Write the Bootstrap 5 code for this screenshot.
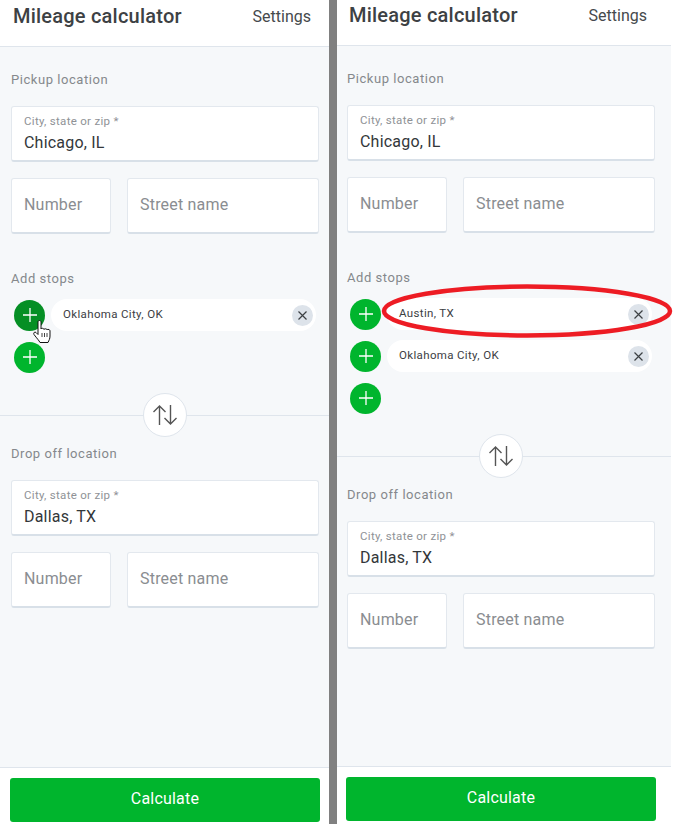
<!DOCTYPE html>
<html><head><meta charset="utf-8"><title>Mileage calculator</title>
<link href="https://cdn.jsdelivr.net/npm/bootstrap@5.3.0/dist/css/bootstrap.min.css" rel="stylesheet">
<style>
html,body{height:824px;overflow:hidden;background:#fff}
body{font-family:Roboto,"Liberation Sans",sans-serif;color:#3c4043}
.shell{height:824px;width:674px;background:#fff}
.pane{background:#f6f8fa;height:825px}
.pane-a{width:329px}
.pane-b{width:334px;margin-top:-1px}
.shell-gap{width:8px;background:#808080;flex:none;height:824px}
.top-bar{height:47px;background:#fff;border-bottom:1px solid #dfe5ec;padding:0 18px 15px 13px;flex:none}
.pane-b .top-bar{padding-left:12px;padding-right:24px}
.app-title{font-size:20px;font-weight:500;color:#3d4144;line-height:1;margin:0;letter-spacing:.22px}
.set-link{font-size:16px;color:#45494c;text-decoration:none;letter-spacing:0;padding-top:2px}
.main-area{padding:0 10px 0 11px;flex:1 1 auto}
.pane-b .main-area{padding:0 16px 0 10px}
.sec-label{font-size:13px;font-weight:400;color:#85888c;line-height:16px;margin:0;letter-spacing:.55px}
.lbl-pick{padding-top:25px;height:59px}
.box{background:#fff;border:1px solid #e3e8ee;border-bottom:2px solid #d8e0e8;border-radius:3px;height:56px;padding:0 12px;display:flex;flex-direction:column;justify-content:center}
.box-lbl{font-size:11.5px;color:#8f9296;line-height:14px;letter-spacing:.3px}
.box-val{font-size:16px;color:#33373a;line-height:22px;margin-top:4px;letter-spacing:.2px}
.box-ph{font-size:16px;color:#8a8d91;line-height:22px;padding-bottom:2px;letter-spacing:.2px}
.addr-row{display:flex;gap:16px;margin-top:16px}
.col-num{width:100px;flex:none}
.col-street{flex:1 1 auto}
.lbl-stops{margin-top:37px;height:28px}
.stop-row{display:flex;align-items:center;gap:6px;margin-left:3px;margin-right:3px;height:32px;margin-bottom:10px}
.round-add{width:31px;height:31px;border-radius:50%;background:#00b52d;border:0;padding:0;flex:none;display:flex;align-items:center;justify-content:center}
.round-add.hover-state{background:#058f24}
.chip{background:#fff;border-radius:16px;height:32px;flex:1 1 auto;display:flex;align-items:center;justify-content:space-between;padding:0 3px 0 12px;font-size:11.5px;color:#3c4043;letter-spacing:.35px}
.chip-x{width:21px;height:21px;border-radius:50%;background:#dde3ea;border:0;padding:0;display:flex;align-items:center;justify-content:center;flex:none}
.swap-line{position:relative;height:1px;background:#dfe5ec;margin:0 -10px 0 -11px}
.pane-b .swap-line{margin:0 -16px 0 -10px}
.swap-btn{position:absolute;left:50%;top:-22px;width:44px;height:44px;margin-left:-22px;border-radius:50%;background:#fff;border:1px solid #dfe5ec;padding:0;display:flex;align-items:center;justify-content:center}
.pane-b .swap-btn{margin-left:-25px}
.stops-box{height:116px}
.pane-b .stops-box{height:158px}
.lbl-drop{padding-top:30px;height:64px}
.foot-bar{height:58px;background:#fff;border-top:1px solid #dfe5ec;padding:10px 9px 0 10px;flex:none}
.pane-b .foot-bar{padding-right:15px;padding-left:9px}
.go-btn{display:block;width:100%;height:44px;background:#00b52d;color:#fff;border:0;border-radius:3px;font-size:16px;font-weight:400;letter-spacing:.2px;padding:0 0 3px}
.hand-cursor{position:absolute;left:33px;top:320px}
</style></head><body>
<div class="shell d-flex position-relative">
<section class="pane pane-a d-flex flex-column">
<header class="top-bar d-flex align-items-center justify-content-between"><h1 class="app-title">Mileage calculator</h1><a class="set-link" href="#">Settings</a></header>
<div class="main-area">
<p class="sec-label lbl-pick">Pickup location</p>
<div class="box"><span class="box-lbl">City, state or zip *</span><span class="box-val">Chicago, IL</span></div>
<div class="addr-row"><div class="box col-num"><span class="box-ph">Number</span></div><div class="box col-street"><span class="box-ph">Street name</span></div></div>
<p class="sec-label lbl-stops">Add stops</p>
<div class="stops-box">
<div class="stop-row"><button class="round-add hover-state"><svg width="14" height="14" viewBox="0 0 14 14"><path d="M7 0v14M0 7h14" stroke="#fff" stroke-width="1.3"/></svg></button><div class="chip"><span>Oklahoma City, OK</span><button class="chip-x"><svg width="11" height="11" viewBox="0 0 11 11"><path d="M1.500 1.500l8 8M9.500 1.500l-8 8" stroke="#3c4043" stroke-width="1.2"/></svg></button></div></div>
<div class="stop-row"><button class="round-add"><svg width="14" height="14" viewBox="0 0 14 14"><path d="M7 0v14M0 7h14" stroke="#fff" stroke-width="1.3"/></svg></button></div>
</div>
<div class="swap-line"><button class="swap-btn"><svg width="24" height="20" viewBox="0 0 24 20"><path d="M6.500 20V1M.5 7l6-6 6 6M17.500 0v19M11.500 13l6 6 6-6" fill="none" stroke="#555" stroke-width="1.4"/></svg></button></div>
<p class="sec-label lbl-drop">Drop off location</p>
<div class="box"><span class="box-lbl">City, state or zip *</span><span class="box-val">Dallas, TX</span></div>
<div class="addr-row"><div class="box col-num"><span class="box-ph">Number</span></div><div class="box col-street"><span class="box-ph">Street name</span></div></div>
</div>
<footer class="foot-bar"><button class="go-btn">Calculate</button></footer>
</section>
<div class="shell-gap"></div>
<section class="pane pane-b d-flex flex-column">
<header class="top-bar d-flex align-items-center justify-content-between"><h1 class="app-title">Mileage calculator</h1><a class="set-link" href="#">Settings</a></header>
<div class="main-area">
<p class="sec-label lbl-pick">Pickup location</p>
<div class="box"><span class="box-lbl">City, state or zip *</span><span class="box-val">Chicago, IL</span></div>
<div class="addr-row"><div class="box col-num"><span class="box-ph">Number</span></div><div class="box col-street"><span class="box-ph">Street name</span></div></div>
<p class="sec-label lbl-stops">Add stops</p>
<div class="stops-box">
<div class="stop-row"><button class="round-add"><svg width="14" height="14" viewBox="0 0 14 14"><path d="M7 0v14M0 7h14" stroke="#fff" stroke-width="1.3"/></svg></button><div class="chip"><span>Austin, TX</span><button class="chip-x"><svg width="11" height="11" viewBox="0 0 11 11"><path d="M1.500 1.500l8 8M9.500 1.500l-8 8" stroke="#3c4043" stroke-width="1.2"/></svg></button></div></div>
<div class="stop-row"><button class="round-add"><svg width="14" height="14" viewBox="0 0 14 14"><path d="M7 0v14M0 7h14" stroke="#fff" stroke-width="1.3"/></svg></button><div class="chip"><span>Oklahoma City, OK</span><button class="chip-x"><svg width="11" height="11" viewBox="0 0 11 11"><path d="M1.500 1.500l8 8M9.500 1.500l-8 8" stroke="#3c4043" stroke-width="1.2"/></svg></button></div></div>
<div class="stop-row"><button class="round-add"><svg width="14" height="14" viewBox="0 0 14 14"><path d="M7 0v14M0 7h14" stroke="#fff" stroke-width="1.3"/></svg></button></div>
</div>
<div class="swap-line"><button class="swap-btn"><svg width="24" height="20" viewBox="0 0 24 20"><path d="M6.500 20V1M.5 7l6-6 6 6M17.500 0v19M11.500 13l6 6 6-6" fill="none" stroke="#555" stroke-width="1.4"/></svg></button></div>
<p class="sec-label lbl-drop">Drop off location</p>
<div class="box"><span class="box-lbl">City, state or zip *</span><span class="box-val">Dallas, TX</span></div>
<div class="addr-row"><div class="box col-num"><span class="box-ph">Number</span></div><div class="box col-street"><span class="box-ph">Street name</span></div></div>
</div>
<footer class="foot-bar"><button class="go-btn">Calculate</button></footer>
</section>
<svg class="hand-cursor" width="19" height="24" viewBox="0 0 19 24"><path d="M5 2c0-2 3-2 3 0v7c0-1 3-1 3 .5 0-1 3-1 3 .5 0-1 3-1 3 1v5c0 3-1 4-2 6.500H7c-1-2-3-4-6-8-1-2 1-3 2-2l2 2z" fill="#fff" stroke="#111" stroke-width="1"/><path d="M9 13v4M11.500 13v4M14 13v4" stroke="#111" stroke-width=".8"/></svg>
<svg class="position-absolute top-0 start-0 pe-none" width="674" height="824" viewBox="0 0 674 824"><ellipse cx="527" cy="311" rx="143" ry="24.500" fill="none" stroke="#ed1c24" stroke-width="4.500"/></svg>
</div>
</body></html>
